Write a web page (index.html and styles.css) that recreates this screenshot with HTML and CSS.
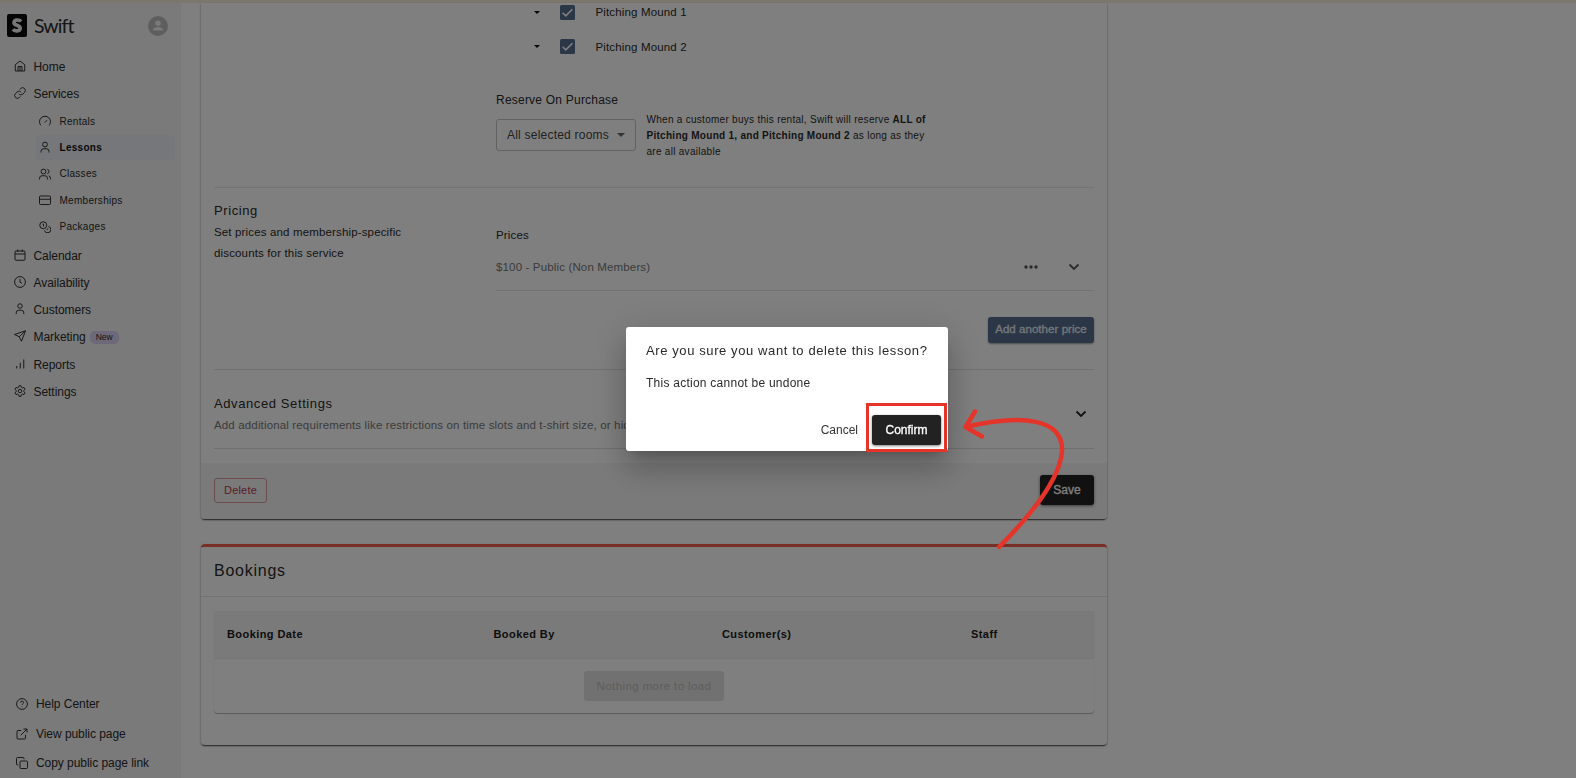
FILE: index.html
```
<!DOCTYPE html>
<html lang="en">
<head>
    <meta charset="UTF-8">
    <meta name="viewport" content="width=device-width, initial-scale=1.0">
    <title>Swift - Lessons</title>
    <link rel="stylesheet" href="styles.css">
</head>
<body>
    <div class="top-strip"></div>
    <div class="app">
        <!-- Sidebar -->
        <aside class="sidebar">
            <div class="brand">
                <svg class="logo" viewBox="0 0 20 23"><rect width="20" height="23" rx="2" fill="#0a0a0a"/><path d="M14 7.500C12.500 5.500 7.200 5.300 7 8.500C6.800 11.800 13.300 10.800 13.200 14.300C13 17.600 7.500 17.500 6 15.300" fill="none" stroke="#eee" stroke-width="3.600"/></svg>
                <span class="brand-name">Swift</span>
                <svg class="avatar" viewBox="0 0 20 20"><circle cx="10" cy="10" r="10" fill="#bdbdbd"/><circle cx="10" cy="7.300" r="2.700" fill="#f5f5f5"/><path d="M4.800 14.600c0-2.300 3-3.500 5.200-3.500s5.200 1.200 5.200 3.500z" fill="#f5f5f5"/></svg>
            </div>
            <nav class="nav">
                <a class="nav-item"><svg class="icon" viewBox="0 0 24 24"><path d="M2.500 9.500L12 2l9.500 7.500V22h-19z M8 22v-9h8v9 M12 13v9"/></svg>Home</a>
                <a class="nav-item"><svg class="icon" viewBox="0 0 24 24"><path d="M9.500 13.500a5.500 5.500 0 0 0 8.300.500l3.200-3.200a5.500 5.500 0 0 0-7.800-7.800L11.300 4.900 M14.500 10.500a5.500 5.500 0 0 0-8.300-.500L3 13.200a5.500 5.500 0 0 0 7.800 7.800l1.900-1.900"/></svg>Services</a>
                <div class="subnav">
                    <a class="nav-item"><svg class="icon" viewBox="0 0 24 24"><path d="M3.500 20.500a11 11 0 1 1 17 0 M11.500 15l4.500-4.500"/></svg>Rentals</a>
                    <a class="nav-item active"><svg class="icon" viewBox="0 0 24 24"><circle cx="12" cy="7" r="4.800"/><path d="M4 23v-2.500a5 5 0 0 1 5-5h6a5 5 0 0 1 5 5V23"/></svg>Lessons</a>
                    <a class="nav-item"><svg class="icon" viewBox="0 0 24 24"><circle cx="9" cy="7" r="4.800"/><path d="M1 23v-2.500a5 5 0 0 1 5-5h6a5 5 0 0 1 5 5V23 M16.500 2.400a4.800 4.800 0 0 1 0 9.200 M19.500 15.700a5 5 0 0 1 3.500 4.800V23"/></svg>Classes</a>
                    <a class="nav-item"><svg class="icon" viewBox="0 0 24 24"><rect x="1" y="4" width="22" height="17" rx="2"/><path d="M1 10.500h22"/></svg>Memberships</a>
                    <a class="nav-item"><svg class="icon" viewBox="0 0 24 24"><circle cx="8.500" cy="8.500" r="7"/><path d="M18.800 10.800a6.500 6.500 0 1 1-7.800 8 M7.500 6h1.500v5 M17 14.500l1 1-2.500 2.500"/></svg>Packages</a>
                </div>
                <a class="nav-item"><svg class="icon" viewBox="0 0 24 24"><rect x="2" y="4" width="20" height="18.500" rx="2"/><path d="M2 10h20 M7.500 1v5 M16.500 1v5"/></svg>Calendar</a>
                <a class="nav-item"><svg class="icon" viewBox="0 0 24 24"><circle cx="12" cy="12" r="10.800"/><path d="M12 6v6.500l4 2"/></svg>Availability</a>
                <a class="nav-item"><svg class="icon" viewBox="0 0 24 24"><circle cx="12" cy="6" r="4.500"/><path d="M4.500 22v-2.500a5 5 0 0 1 5-5h5a5 5 0 0 1 5 5V22"/></svg>Customers</a>
                <a class="nav-item"><svg class="icon" viewBox="0 0 24 24"><path d="M23 1.500L15 22.500l-4.500-9L1 9z M23 1.500l-12.500 12"/></svg>Marketing<span class="badge">New</span></a>
                <a class="nav-item"><svg class="icon" viewBox="0 0 24 24"><path d="M5.500 21v-5 M12.500 21V9.500 M19.500 21V3"/></svg>Reports</a>
                <a class="nav-item"><svg class="icon" viewBox="0 0 24 24"><circle cx="12" cy="12" r="3.500"/><path d="M10 1.500h4l.8 3 2.200 1.300 3-.9 2 3.500-2.200 2.200v2.800l2.200 2.200-2 3.500-3-.9-2.200 1.300-.8 3h-4l-.8-3L7 18.200l-3 .9-2-3.500 2.200-2.200v-2.800L2 8.400l2-3.500 3 .9 2.200-1.300z"/></svg>Settings</a>
            </nav>
            <div class="nav-bottom">
                <a class="nav-item"><svg class="icon" viewBox="0 0 24 24"><circle cx="12" cy="12" r="10.800"/><path d="M9 9.200a3 3 0 0 1 6 .3c0 2-3 2.500-3 4.300 M12 17v1.200"/></svg>Help Center</a>
                <a class="nav-item"><svg class="icon" viewBox="0 0 24 24"><path d="M19 13.500V20a2 2 0 0 1-2 2H4a2 2 0 0 1-2-2V7a2 2 0 0 1 2-2h6.500 M15 2h7v7 M22 2L9.500 14.500"/></svg>View public page</a>
                <a class="nav-item"><svg class="icon" viewBox="0 0 24 24"><rect x="8" y="8" width="15" height="15" rx="2"/><path d="M4.500 16H3a2 2 0 0 1-2-2V3a2 2 0 0 1 2-2H14a2 2 0 0 1 2 2v1.500"/></svg>Copy public page link</a>
            </div>
        </aside>

        <!-- Content -->
        <main class="main">
            <section class="card form-card">
                <div class="rooms">
                    <div class="room"><span class="caret"></span><svg class="checkbox" viewBox="0 0 15 15"><rect width="15" height="15" rx="1.500"/><path d="M2.600 7.700l3.200 3.200 6.600-6.700"/></svg>Pitching Mound 1</div>
                    <div class="room"><span class="caret"></span><svg class="checkbox" viewBox="0 0 15 15"><rect width="15" height="15" rx="1.500"/><path d="M2.600 7.700l3.200 3.200 6.600-6.700"/></svg>Pitching Mound 2</div>
                </div>
                <div class="reserve">
                    <div class="reserve-label">Reserve On Purchase</div>
                    <div class="reserve-row">
                        <div class="select">All selected rooms<span class="caret"></span></div>
                        <p class="reserve-help">When a customer buys this rental, Swift will reserve <b>ALL of<br>Pitching Mound 1, and Pitching Mound 2</b> as long as they<br>are all available</p>
                    </div>
                </div>
                <div class="pricing">
                    <div class="pricing-info">
                        <h3>Pricing</h3>
                        <p>Set prices and membership-specific<br>discounts for this service</p>
                    </div>
                    <div class="prices">
                        <div class="prices-label">Prices</div>
                        <div class="price-row">
                            <span>$100 - Public (Non Members)</span>
                            <svg class="dots" viewBox="0 0 14 4"><circle cx="2" cy="2" r="1.700"/><circle cx="7" cy="2" r="1.700"/><circle cx="12" cy="2" r="1.700"/></svg>
                            <svg class="chevron" viewBox="0 0 12 8"><path d="M1.500 1.500L6 6l4.500-4.500"/></svg>
                        </div>
                        <button class="btn btn-blue">Add another price</button>
                    </div>
                </div>
                <div class="advanced">
                    <div>
                        <h3>Advanced Settings</h3>
                        <p>Add additional requirements like restrictions on time slots and t-shirt size, or hide this service</p>
                    </div>
                    <svg class="chevron" viewBox="0 0 12 8"><path d="M1.500 1.500L6 6l4.500-4.500"/></svg>
                </div>
                <div class="card-footer">
                    <button class="btn btn-delete">Delete</button>
                    <button class="btn btn-dark btn-save">Save</button>
                </div>
            </section>

            <section class="card bookings">
                <h2>Bookings</h2>
                <div class="table">
                    <div class="table-head">
                        <span>Booking Date</span>
                        <span>Booked By</span>
                        <span>Customer(s)</span>
                        <span>Staff</span>
                    </div>
                    <div class="table-empty"><button class="btn btn-disabled" disabled>Nothing more to load</button></div>
                </div>
            </section>
        </main>
    </div>

    <!-- Confirm dialog -->
    <div class="backdrop">
        <div class="dialog">
            <h4>Are you sure you want to delete this lesson?</h4>
            <p>This action cannot be undone</p>
            <div class="dialog-actions">
                <button class="btn btn-text">Cancel</button>
                <div class="highlight"><button class="btn btn-dark">Confirm</button></div>
            </div>
        </div>
        <svg class="arrow" viewBox="0 0 110 150"><path d="M43 142C69 116 103 77 106 47C108 13 66 9 9.500 22 M19 6.500L9.500 22l16.500 9.500"/></svg>
    </div>
</body>
</html>
```
FILE: styles.css
```
* {
    box-sizing: border-box;
}
body {
    margin: 0;
    height: 778px;
    overflow: hidden;
    background: #fff;
    color: #2a2a2a;
    font-family: "Liberation Sans", Arial, sans-serif;
    font-size: 11.5px;
    letter-spacing: 0.15px;
}
h2, h3, h4, p {
    margin: 0;
    font-weight: normal;
}
.top-strip {
    height: 3px;
    background: #f6eed8;
}
.app {
    display: flex;
    height: 775px;
}

/* Sidebar */
.sidebar {
    display: flex;
    flex-direction: column;
    width: 181px;
    flex-shrink: 0;
    background: #f4f4f4;
}
.brand {
    display: flex;
    align-items: center;
    height: 45px;
    padding: 0 13px 0 7px;
}
.logo {
    width: 20px;
    height: 23px;
}
.brand-name {
    margin: -1px auto 0 7px;
    font-family: Lato, sans-serif;
    font-size: 19.5px;
    letter-spacing: -0.9px;
}
.avatar {
    width: 20px;
    height: 20px;
}
.nav {
    padding-top: 5.5px;
}
.nav-item {
    display: flex;
    align-items: center;
    height: 27.2px;
    padding-left: 13.5px;
    font-size: 12px;
    letter-spacing: -0.05px;
}
.icon {
    width: 12px;
    height: 12px;
    margin-right: 8px;
    position: relative;
    top: -1px;
    fill: none;
    stroke: #333;
    stroke-width: 2;
    stroke-linejoin: round;
}
.subnav {
    padding: 0 6px 2.5px 36px;
}
.subnav .nav-item {
    height: 26.4px;
    padding-left: 3px;
    font-size: 10px;
    letter-spacing: 0.28px;
}
.subnav .icon {
    margin-right: 8.5px;
    top: 0;
}
.subnav .active {
    height: 24.4px;
    margin: 1px 0;
    border-radius: 4px;
    background: #ebeff4;
    color: #111;
    font-weight: bold;
}
.badge {
    margin-left: 4px;
    padding: 0 6px;
    border-radius: 5px;
    background: #ddd3f5;
    font-size: 8.5px;
    line-height: 13px;
}
.nav-bottom {
    margin-top: auto;
}
.nav-bottom .nav-item {
    height: 29.6px;
    padding-left: 16px;
}
.nav-bottom .icon {
    top: 0;
}

/* Cards */
.main {
    width: 906px;
    margin-left: 20px;
}
.card {
    display: flow-root;
    border-radius: 4px;
    background: #fff;
    box-shadow: 0 2px 1px -1px rgba(0,0,0,.4), 0 1px 2px 0 rgba(0,0,0,.5);
}
.form-card {
    height: 516px;
    border-radius: 0 0 4px 4px;
}
.caret {
    border: 3px solid transparent;
    border-top-color: #111;
    border-bottom: 0;
}
.rooms {
    height: 79px;
    padding-left: 332.5px;
    margin-top: -8px;
}
.room {
    display: flex;
    align-items: center;
    height: 34.5px;
}
.checkbox {
    width: 15px;
    height: 15px;
    margin: 0 21px 0 20px;
    fill: #566d8f;
}
.checkbox path {
    fill: none;
    stroke: #fff;
    stroke-width: 1.6;
}
.reserve {
    height: 113px;
    padding: 19px 0 0 295px;
}
.reserve-label {
    font-size: 12px;
    line-height: 15px;
    letter-spacing: 0.22px;
}
.reserve-row {
    display: flex;
    align-items: flex-start;
    margin-top: 4px;
}
.select {
    display: flex;
    align-items: center;
    justify-content: space-between;
    width: 140px;
    height: 32px;
    margin-top: 7px;
    padding: 0 10px;
    border: 1px solid #c4c4c4;
    border-radius: 3px;
    color: #444;
    font-size: 12px;
    letter-spacing: 0.22px;
}
.select .caret {
    border-width: 4px 4px 0;
    border-top-color: #666;
}
.reserve-help {
    margin-left: 10.5px;
    font-size: 10px;
    line-height: 16.2px;
    letter-spacing: 0.28px;
}
.pricing {
    display: flex;
    height: 182px;
    margin: 0 13px;
    border-top: 1px solid #eaeaea;
}
.pricing-info {
    width: 282px;
    padding-top: 13px;
}
h3 {
    font-size: 13px;
    line-height: 20px;
    letter-spacing: 0.6px;
}
.pricing-info p {
    line-height: 20.7px;
    margin-top: 1px;
}
.prices {
    display: flex;
    flex-direction: column;
    flex: 1;
    padding-top: 40px;
}
.prices-label {
    line-height: 15px;
}
.price-row {
    display: flex;
    align-items: center;
    height: 48px;
    padding-right: 14px;
    border-bottom: 1px solid #e6e6e6;
    color: #777;
}
.dots {
    width: 14px;
    height: 4px;
    margin-left: auto;
    fill: #555;
}
.chevron {
    width: 12px;
    height: 8px;
    fill: none;
    stroke: #222;
    stroke-width: 1.8;
}
.price-row .chevron {
    margin-left: 30px;
    stroke: #555;
}
.advanced {
    display: flex;
    align-items: center;
    justify-content: space-between;
    height: 80px;
    margin: 0 13px;
    padding: 10px 7px 0 0;
    border-top: 1px solid #e2e2e2;
    border-bottom: 1px solid #dedede;
}
.advanced p {
    margin-top: 2px;
    color: #777;
    line-height: 18px;
}
.card-footer {
    display: flex;
    align-items: center;
    justify-content: space-between;
    height: 56px;
    margin-top: 14px;
    padding: 0 13px 2px;
    border-radius: 0 0 4px 4px;
    background: #f4f4f4;
}

/* Buttons */
.btn {
    padding: 0;
    border: none;
    border-radius: 3px;
    font-family: inherit;
    font-size: 12px;
}
.btn-blue {
    align-self: flex-end;
    width: 106px;
    height: 26px;
    margin-top: 26px;
    padding-bottom: 2px;
    background: #566d8f;
    color: #e8edf5;
    font-size: 11.5px;
    letter-spacing: 0.05px;
    -webkit-text-stroke: 0.3px #e8edf5;
    box-shadow: 0 1px 2px rgba(0,0,0,.4);
}
.btn-delete {
    width: 53px;
    height: 25px;
    border: 1px solid #d99a9f;
    background: transparent;
    color: #b3404a;
    font-size: 11px;
    letter-spacing: 0.2px;
}
.btn-dark {
    height: 30px;
    background: #222;
    color: #fff;
    -webkit-text-stroke: 0.3px #fff;
    box-shadow: 0 1px 3px rgba(0,0,0,.5);
}
.btn-save {
    width: 54px;
}
.btn-disabled {
    width: 140px;
    height: 30px;
    background: #e2e2e2;
    color: #bbb;
    font-size: 11.5px;
    letter-spacing: 0.4px;
}

/* Bookings */
.bookings {
    height: 201px;
    margin-top: 25px;
    border-top: 3px solid #f0604d;
}
.bookings h2 {
    height: 49.5px;
    padding-left: 13px;
    border-bottom: 1px solid #e6e6e6;
    font-size: 16px;
    line-height: 48px;
    letter-spacing: 0.75px;
}
.table {
    height: 102px;
    margin: 14px 13px 0;
    border-radius: 4px;
    box-shadow: 0 1px 1px rgba(0,0,0,.3);
}
.table-head {
    display: grid;
    grid-template-columns: 266.5px 228.5px 249px 1fr;
    align-items: center;
    height: 48px;
    background: #f4f4f4;
    border-bottom: 1px solid #eaeaea;
    color: #1a1a1a;
    font-size: 11px;
    font-weight: bold;
    letter-spacing: 0.42px;
}
.table-head span {
    padding-left: 13px;
}
.table-empty {
    display: flex;
    align-items: center;
    justify-content: center;
    height: 54px;
}

/* Dialog */
.backdrop {
    position: fixed;
    inset: 0;
    display: flex;
    align-items: center;
    justify-content: center;
    background: rgba(0, 0, 0, 0.5);
}
.dialog {
    width: 322px;
    height: 124px;
    padding: 14px 1px 0 20px;
    margin-right: 2px;
    border-radius: 3px;
    background: #fff;
    box-shadow: 0 9px 12px -6px rgba(0,0,0,.2), 0 19px 30px 2px rgba(0,0,0,.14), 0 7px 37px 6px rgba(0,0,0,.12);
}
.dialog h4 {
    font-size: 13px;
    line-height: 20px;
    letter-spacing: 0.6px;
    white-space: nowrap;
}
.dialog p {
    margin-top: 14px;
    font-size: 12px;
    line-height: 16px;
    letter-spacing: 0.25px;
}
.dialog-actions {
    display: flex;
    align-items: center;
    justify-content: flex-end;
    margin-top: 12px;
}
.btn-text {
    margin: 5px 8px 0 0;
    background: none;
    color: #333;
}
.highlight {
    width: 81px;
    height: 49px;
    padding: 9px 3px 0;
    border: 3px solid #e5342a;
}
.highlight .btn {
    width: 69px;
}
.arrow {
    position: absolute;
    left: 956px;
    top: 405px;
    width: 110px;
    height: 150px;
    fill: none;
    stroke: #e5342a;
    stroke-width: 4.5;
    stroke-linecap: round;
    stroke-linejoin: round;
}
```
